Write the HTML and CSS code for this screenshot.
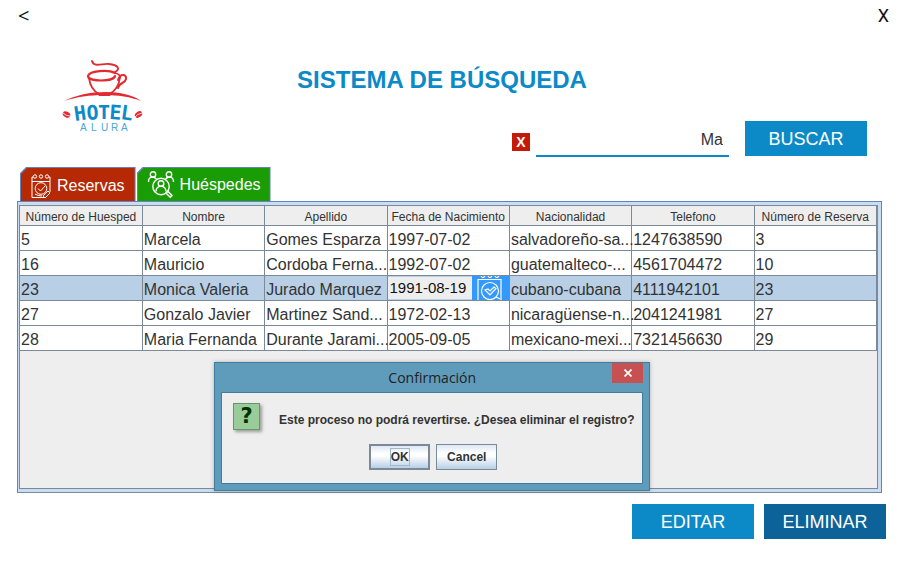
FILE: index.html
```html
<!DOCTYPE html>
<html lang="es">
<head>
<meta charset="utf-8">
<title>Hotel Alura</title>
<link rel="stylesheet" href="styles.css">
</head>
<body>
<nav class="topbar">
  <button class="nav-btn nav-back" type="button" aria-label="Volver">&lt;</button>
  <button class="nav-btn" type="button" aria-label="Salir">X</button>
</nav>
<header class="header">
  <svg class="logo" viewBox="0 0 90 80" width="90" height="80" role="img" aria-label="Hotel Alura">
    <g fill="none" stroke="#e32a31" stroke-linecap="round">
      <path d="M31 5c2 7 11 2 17 3 9 1 12 5 6 8" stroke-width="1.900"/>
      <path d="M54 17c-7-4-26-2-27 3 0 6 26 6 27 0" stroke-width="2.200"/>
      <path d="M28 22c1 8 4 13 10 16M59 21c-1 9-4 14-11 17" stroke-width="1.900"/>
      <path d="M54 17c4 1 6 3 5 5" stroke-width="1.600"/>
      <path d="M57 24c2-7 9-6 8-1s-7 3-8 9" stroke-width="2"/>
    </g>
    <g fill="#e32a31">
      <path d="M3 45C24 34 63 32 80 45C60 37 27 37 3 45z"/>
      <path d="M35 36c5 3 12 3 17 0l-3 4h-11z"/>
      <ellipse cx="5.500" cy="58.500" rx="4" ry="2.800" transform="rotate(30 5.500 58.500)"/>
      <ellipse cx="77.500" cy="58.500" rx="4" ry="2.800" transform="rotate(-35 77.500 58.500)"/>
    </g>
    <path d="M2 57q3 3 7 3M74 61q2-3 7-4" fill="none" stroke="#fff" stroke-width=".8"/>
    <text class="logo-hotel" x="14 26 37 48 59" y="65 64 63 63 63" rotate="-8 -4 0 4 8">HOTEL</text>
    <text class="logo-alura" x="19 30 40 50 60" y="75">ALURA</text>
  </svg>
  <h1 class="title">SISTEMA DE BÚSQUEDA</h1>
  <form class="search">
    <button class="clear" type="button" aria-label="Limpiar">X</button>
    <input class="search-input" type="text" value="Ma" aria-label="Buscar">
    <button class="btn" type="button">BUSCAR</button>
  </form>
</header>
<main class="main">
  <div class="tabs" role="tablist">
    <button class="tab" type="button" role="tab"><span class="tab-face tab-red">
      <svg viewBox="0 0 20 26" width="20" height="26" fill="none" stroke="#fff">
        <path d="M1 4V24.500H13M19 4V19M1 4h1M19 4h-1M1 8.500H19"/>
        <circle cx="4" cy="3.500" r="1.700"/><circle cx="10" cy="3.500" r="1.700"/><circle cx="16" cy="3.500" r="1.700"/>
        <circle cx="10" cy="15.500" r="5.800"/><path d="M7 15.500l2.500 2.500 4.500-5M12 23l5-5 2 2-5 5zM4 21q3 2 7 2"/>
      </svg>Reservas</span></button>
    <button class="tab" type="button" role="tab" aria-selected="true"><span class="tab-face tab-green">
      <svg viewBox="0 0 28 28" width="28" height="28" fill="none" stroke="#fff" stroke-width="1.400">
        <circle cx="6" cy="3.500" r="2.700"/><circle cx="22" cy="3.500" r="2.700"/>
        <path d="M1.500 11c0-6 5-6 8-3M26.500 11c0-6-5-6-8-3"/>
        <circle cx="14" cy="15.500" r="8.200"/><circle cx="14" cy="12.500" r="2.800"/>
        <path d="M9 20.500c0-7 10-7 10 0M19 22l2-1.500 4 4-1.800 1.800z"/>
      </svg>Huéspedes</span></button>
  </div>
  <section class="panel">
    <div class="viewport">
      <table class="grid">
        <thead>
          <tr><th>Número de Huesped</th><th>Nombre</th><th>Apellido</th><th>Fecha de Nacimiento</th><th>Nacionalidad</th><th>Telefono</th><th>Número de Reserva</th></tr>
        </thead>
        <tbody>
          <tr><td>5</td><td>Marcela</td><td>Gomes Esparza</td><td>1997-07-02</td><td>salvadoreño-sa...</td><td>1247638590</td><td>3</td></tr>
          <tr><td>16</td><td>Mauricio</td><td>Cordoba Ferna...</td><td>1992-07-02</td><td>guatemalteco-...</td><td>4561704472</td><td>10</td></tr>
          <tr class="selected"><td>23</td><td>Monica Valeria</td><td>Jurado Marquez</td><td class="editing"><div class="date-editor"><input class="date-input" type="text" value="1991-08-19" aria-label="Fecha de Nacimiento"><button class="date-btn" type="button" aria-label="Calendario">
            <svg viewBox="0 0 26 24" width="26" height="24" fill="none" stroke="#fff" stroke-width="1.200">
              <path d="M1 24V3.500H24V24"/><path d="M4 0q1.500 3 4 0M11 0q1.500 3 4 0M18 0q1.500 3 4 0"/>
              <circle cx="13" cy="15" r="8.500"/><path d="M8 14l3-1 2 2 4-4 2 1.500-6 6.500zM19 21l4 2"/>
            </svg></button></div></td><td>cubano-cubana</td><td>4111942101</td><td>23</td></tr>
          <tr><td>27</td><td>Gonzalo Javier</td><td>Martinez Sand...</td><td>1972-02-13</td><td>nicaragüense-n...</td><td>2041241981</td><td>27</td></tr>
          <tr><td>28</td><td>Maria Fernanda</td><td>Durante Jarami...</td><td>2005-09-05</td><td>mexicano-mexi...</td><td>7321456630</td><td>29</td></tr>
        </tbody>
      </table>
    </div>
    <div class="dialog" role="dialog" aria-labelledby="dialog-title">
      <div class="dialog-bar">
        <h2 class="dialog-title" id="dialog-title">Confirmación</h2>
        <button class="dialog-close" type="button" aria-label="Cerrar">
          <svg viewBox="0 0 8 8" width="8" height="8" stroke="#fff" stroke-width="1.700"><path d="M.5.5l7 7M7.500.5l-7 7"/></svg>
        </button>
      </div>
      <div class="dialog-body">
        <div class="dialog-message"><span class="question">?</span><p class="dialog-text">Este proceso no podrá revertirse. ¿Desea eliminar el registro?</p></div>
        <div class="dialog-actions">
          <button class="metal-btn metal-default" type="button"><span class="focus">OK</span></button>
          <button class="metal-btn" type="button">Cancel</button>
        </div>
      </div>
    </div>
  </section>
</main>
<footer class="actions">
  <button class="btn" type="button">EDITAR</button>
  <button class="btn btn-dark" type="button">ELIMINAR</button>
</footer>
</body>
</html>
```
FILE: styles.css
```css
* { box-sizing: border-box; }

body {
  margin: 0;
  min-height: 100vh;
  display: flex;
  flex-direction: column;
  background: #fff;
  color: #333;
  font-family: "Liberation Sans", Arial, sans-serif;
  font-size: 16px;
}

button, input { font: inherit; border: 0; padding: 0; border-radius: 0; }

.topbar { display: flex; justify-content: space-between; height: 30px; padding: 0 18px; }
.nav-btn { background: none; color: #111; font-family: Roboto, sans-serif; font-size: 18px; min-width: 16px; }
.nav-btn:last-child { text-align: right; }
.nav-back { font-family: "Open Sans", sans-serif; font-size: 20px; text-align: left; }

.header {
  display: grid;
  grid-template-columns: auto 1fr;
  grid-template-rows: 91px 35px;
  padding: 0 40px 0 17px;
}
.logo { grid-column: 1; grid-row: 1 / 3; margin: 26px 0 0 44px; }
.logo-hotel { font-family: "DejaVu Sans Mono", monospace; font-size: 20px; font-weight: bold; fill: #0c8ac7; }
.logo-alura { font-family: "Liberation Sans", sans-serif; font-size: 10px; fill: #49a7d6; }
.title {
  grid-column: 1 / 3;
  grid-row: 1;
  margin: 36px 0 0;
  text-align: center;
  font-size: 24px;
  line-height: 28px;
  color: #0c8ac7;
}

.search { grid-column: 2; grid-row: 2; display: flex; justify-content: flex-end; align-items: center; }
.clear { width: 18px; height: 18px; margin: 6px 6px 0 0; padding-top: 1px; background: #c61a09; color: #fff; font-size: 14px; font-weight: bold; line-height: 16px; }
.search-input {
  width: 193px;
  height: 36px;
  margin-right: 16px;
  padding: 4px 6px 0 0;
  border-bottom: 2px solid #0c8ac7;
  background: transparent;
  color: #333;
  text-align: right;
}
.btn { width: 122px; height: 35px; padding-top: 2px; background: #0c8ac7; color: #fff; font-size: 18px; }
.btn-dark { background: #0c6399; }

.main { flex: 1; display: flex; flex-direction: column; padding: 11px 25px 0 17px; }
.tabs { display: flex; gap: 1px; padding-left: 3px; }
.tab {
  height: 34px;
  padding: 1px 1px 0;
  background: #6382bf;
  color: #fff;
  clip-path: polygon(6px 0, 100% 0, 100% 100%, 0 100%, 0 6px);
}
.tab-face {
  display: flex;
  align-items: center;
  height: 100%;
  padding: 2px 10px 0;
  clip-path: polygon(6px 0, 100% 0, 100% 100%, 0 100%, 0 6px);
}
.tab-red { gap: 6px; background: #b52a05; }
.tab-green { gap: 5px; padding: 0 9px; background: #1a9c05; }

.panel {
  position: relative;
  flex: 1;
  display: flex;
  border: 1px solid #6382bf;
  border-bottom-color: #7a8a99;
  background: #c8ddf2;
  padding: 3px 3px 3px 1px;
}
.viewport { flex: 1; border: 1px solid #7a8a99; background: #eee; }
.grid { width: 100%; table-layout: fixed; border-collapse: collapse; margin: -1px 0 0; }
.grid th, .grid td { border: 1px solid #7a8a99; white-space: nowrap; }
.grid th:first-child, .grid td:first-child { border-left: 0; }
.grid th { height: 20px; padding: 2px 0 0; background: #eee; font-size: 12px; font-weight: normal; line-height: 16px; }
.grid td { height: 25px; padding: 3px 0 0 1px; background: #fff; line-height: 20px; }
.grid .selected td { background: #b8cfe5; }
.grid .editing { padding: 0; }
.date-editor { display: flex; height: 24px; }
.date-input { flex: 1; min-width: 0; padding-left: 2px; background: #eee; color: #111; font-size: 15px; border: 1px solid #b8cfe5; border-width: 1px 0; }
.date-btn { width: 37px; background: #3399ff; line-height: 0; }

.dialog {
  position: absolute;
  top: 160px;
  left: 196px;
  padding: 0 6px 6px;
  border: 1px solid #417c9c;
  background: #5f9bba;
  box-shadow: 0 0 4px rgba(0, 0, 0, .25);
}
.dialog-bar { position: relative; height: 29px; }
.dialog-title { margin: 0; text-align: center; font-family: "Open Sans", sans-serif; font-size: 14px; font-weight: normal; line-height: 30px; color: #222; }
.dialog-close { position: absolute; top: 0; right: 0; width: 31px; height: 20px; background: #c75050; line-height: 0; }
.dialog-body { border: 1px solid #417c9c; background: #eee; padding: 10px 8px 9px 10px; color: #333; font-size: 12px; font-weight: bold; }
.dialog-message { display: flex; align-items: center; gap: 19px; }
.question {
  width: 27px;
  height: 27px;
  margin-left: 1px;
  border: 1px solid #669966;
  background: #99cc99;
  box-shadow: 2px 2px 3px rgba(0, 0, 0, .35);
  color: #003300;
  font-family: "DejaVu Sans", sans-serif;
  font-size: 21px;
  line-height: 25px;
  text-align: center;
}
.dialog-text { margin: 6px 0 0; white-space: nowrap; }
.dialog-actions { display: flex; justify-content: center; gap: 6px; margin: 14px 0 4px; }
.metal-btn {
  width: 61px;
  height: 26px;
  border: 1px solid #7a8a99;
  background: linear-gradient(#dde8f3, #fff 35%, #fff 45%, #b8cfe5);
  color: #333;
  font-weight: bold;
}
.metal-default { border-width: 2px; }
.focus { display: inline-block; border: 1px solid #a3b8cc; line-height: 16px; }

.actions { display: flex; justify-content: flex-end; gap: 10px; padding: 11px 21px 24px; }
```
